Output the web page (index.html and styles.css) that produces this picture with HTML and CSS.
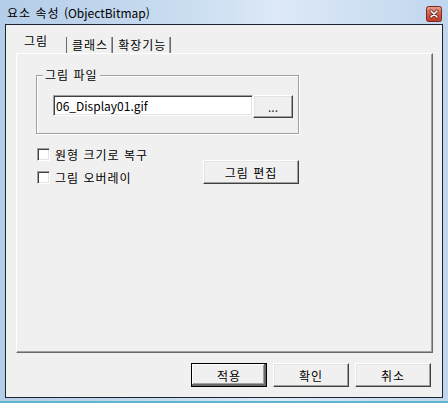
FILE: index.html
```html
<!DOCTYPE html>
<html lang="ko">
<head>
    <meta charset="UTF-8">
    <title>요소 속성 (ObjectBitmap)</title>
    <link rel="stylesheet" href="styles.css">
</head>
<body>
<div class="window">
    <div class="titlebar">
        <span class="title">요소 속성 <span class="latin">(ObjectBitmap)</span></span>
        <span class="close">
            <svg width="16" height="16" viewBox="0 0 16 16">
                <defs>
                    <linearGradient id="red" x1="0" y1="0" x2="0" y2="1">
                        <stop offset="0" stop-color="#e8a08e"/>
                        <stop offset="0.5" stop-color="#d05a44"/>
                        <stop offset="1" stop-color="#c0392b"/>
                    </linearGradient>
                </defs>
                <rect x="0.5" y="0.5" width="15" height="15" rx="2" fill="url(#red)" stroke="#7a2a1e"/>
                <path d="M5 5 L11 11 M11 5 L5 11" stroke="#5a1a12" stroke-width="3" stroke-linecap="round"/>
                <path d="M5 5 L11 11 M11 5 L5 11" stroke="#fff" stroke-width="1.6" stroke-linecap="round"/>
            </svg>
        </span>
    </div>
    <div class="client">
        <div class="tabs">
            <span class="tab selected">그림</span>
            <span class="tab first">클래스</span>
            <span class="tab">확장기능</span>
        </div>
        <div class="panel">
            <div class="group">
                <span class="group-title">그림 파일</span>
                <div class="file-row">
                    <input class="field" type="text" value="06_Display01.gif">
                    <button class="btn browse">...</button>
                </div>
            </div>
            <div class="options">
                <div class="checks">
                    <label class="check"><span class="box"></span>원형 크기로 복구</label>
                    <label class="check"><span class="box"></span>그림 오버레이</label>
                </div>
                <button class="btn edit">그림 편집</button>
            </div>
        </div>
        <div class="footer">
            <button class="btn default">적용</button>
            <button class="btn">확인</button>
            <button class="btn">취소</button>
        </div>
    </div>
</div>
</body>
</html>
```

FILE: styles.css
```css
body{
    margin: 0;
    font-family: "Noto Sans CJK KR", "Noto Sans", sans-serif;
    font-size: 12px;
    letter-spacing: 1px;
    color: #000;
}
.window{
    width: 448px;
    height: 403px;
    box-sizing: border-box;
    display: flex;
    flex-direction: column;
    background: linear-gradient(to right, #b4cde8, #c9dcf0 40%, #dde9f7 62%, #c0d6ee);
    border-bottom: 2px solid #5db6cc;
}
.titlebar{
    height: 24px;
    display: flex;
    justify-content: space-between;
    align-items: flex-start;
    padding: 0 6px 0 7px;
}
.title{
    line-height: 16px;
    margin-top: 5px;
}
.latin{
    letter-spacing: 0;
}
.close{
    margin-top: 6px;
    width: 16px;
    height: 16px;
}
.close svg{
    display: block;
}
.client{
    flex: 1;
    margin: 0 5px 3px 5px;
    border: 1px solid #1c2430;
    background: #f0f0f0;
    padding: 8px 0 0 10px;
    display: flex;
    flex-direction: column;
}
.tabs{
    display: flex;
    align-items: flex-end;
    height: 20px;
}
.tab{
    height: 16px;
    line-height: 15px;
    padding: 0 4px 0 5px;
    border-right: 1px solid #696969;
    box-shadow: inset -1px 0 0 #a0a0a0;
}
.tab.first{
    border-left: 1px solid #696969;
}
.tab.selected{
    height: 20px;
    line-height: 15px;
    padding: 0 0 0 8px;
    border-right: none;
    box-shadow: none;
    width: 42px;
}
.panel{
    width: 417px;
    height: 300px;
    box-sizing: border-box;
    border-top: 1px solid #fff;
    border-left: 1px solid #fff;
    border-right: 1px solid #696969;
    border-bottom: 1px solid #696969;
    box-shadow: inset -1px -1px 0 #a0a0a0;
}
.group{
    width: 263px;
    box-sizing: border-box;
    margin: 21px 0 0 19px;
    border: 1px solid #a0a0a0;
    box-shadow: inset 1px 1px 0 #fff, 1px 1px 0 #fff;
    padding: 0 0 15px 0;
}
.group-title{
    display: table;
    line-height: 14px;
    margin: -8px 0 0 6px;
    padding: 0 2px;
    background: #f0f0f0;
}
.file-row{
    display: flex;
    align-items: flex-start;
    margin-top: 13px;
    padding-left: 16px;
}
.field{
    width: 200px;
    height: 21px;
    box-sizing: border-box;
    margin: 0;
    padding: 0 2px;
    font: inherit;
    letter-spacing: 0;
    border-top: 1px solid #a0a0a0;
    border-left: 1px solid #a0a0a0;
    border-right: 1px solid #fff;
    border-bottom: 1px solid #fff;
    box-shadow: inset 1px 1px 0 #404040, inset -1px -1px 0 #e3e3e3;
    background: #fff;
    outline: none;
}
.btn{
    height: 24px;
    box-sizing: border-box;
    margin: 0;
    padding: 0;
    font: inherit;
    letter-spacing: 1px;
    color: #000;
    background: #f0f0f0;
    border-top: 1px solid #fff;
    border-left: 1px solid #fff;
    border-right: 1px solid #404040;
    border-bottom: 1px solid #404040;
    box-shadow: inset -1px -1px 0 #a0a0a0, inset 1px 1px 0 #e3e3e3;
    border-radius: 0;
}
.browse{
    width: 40px;
    height: 23px;
    line-height: 14px;
    letter-spacing: 0;
    color: #333;
}
.options{
    width: 263px;
    display: flex;
    align-items: flex-start;
    margin: 9px 0 0 19px;
}
.checks{
    display: flex;
    flex-direction: column;
}
.check{
    height: 23px;
    display: flex;
    align-items: center;
}
.box{
    width: 13px;
    height: 13px;
    box-sizing: border-box;
    margin: 0 5px 0 1px;
    background: #fff;
    border-top: 1px solid #a0a0a0;
    border-left: 1px solid #a0a0a0;
    border-right: 1px solid #fff;
    border-bottom: 1px solid #fff;
    box-shadow: inset 1px 1px 0 #404040, inset -1px -1px 0 #e3e3e3;
}
.edit{
    width: 96px;
    margin: 17px 0 0 auto;
}
.footer{
    display: flex;
    justify-content: flex-end;
    gap: 6px;
    margin-top: 10px;
    padding-right: 11px;
}
.footer .btn{
    width: 76px;
}
.btn.default{
    outline: 1px solid #000;
    outline-offset: -1px;
    box-shadow: inset -2px -2px 0 #696969, inset 1px 1px 0 #fff, inset -3px -3px 0 #a0a0a0;
}
```
